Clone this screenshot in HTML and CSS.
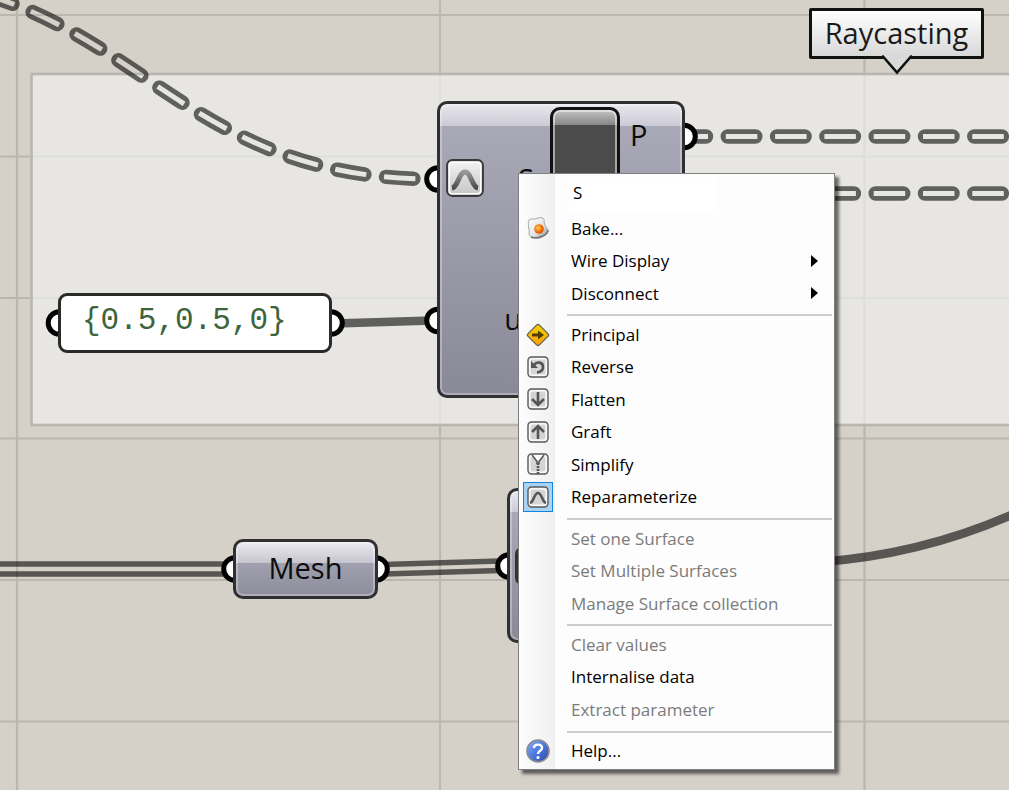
FILE: index.html
```html
<!DOCTYPE html>
<html lang="en">
<head>
<meta charset="utf-8">
<title>Raycasting definition</title>
<link rel="stylesheet" href="styles.css">
</head>
<body>
<main class="canvas">
  <svg class="layer" aria-hidden="true">
    <defs>
      <mask id="hollow" maskUnits="userSpaceOnUse" x="-200" y="-60" width="3000" height="400">
        <g fill="none" stroke="#fff" stroke-width="14.5" stroke-linecap="round" stroke-dasharray="27.5 21.8">
          <path d="M433 179C158 179 132 -23 -143 -23" stroke-dashoffset="-19.5"/>
          <path d="M678.5 136.5H2700M678.5 193.5H2700"/>
        </g>
        <g fill="none" stroke="#000" stroke-width="5" stroke-dasharray="31.5 17.8">
          <path d="M433 179C158 179 132 -23 -143 -23" stroke-dashoffset="-17.5"/>
          <path d="M676.5 136.5H2700M676.5 193.5H2700"/>
        </g>
      </mask>
    </defs>
    <g class="grid-lines">
      <path d="M17 0V2000M440 0V2000M864.5 0V2000M1288 0V2000M0 15H3000M0 156.5H3000M0 298H3000M0 438.5H3000M0 580H3000M0 721.5H3000M0 863H3000"/>
    </g>
    <rect class="group" x="31.5" y="74" width="2900" height="351"/>
    <rect class="wire-fill" x="-200" y="-60" width="3000" height="400" mask="url(#hollow)"/>
    <g class="wire">
      <path stroke-width="8.5" d="M335 323.5L432 320.5M820 562Q919 554.8 1009 516L1060 494"/>
      <path stroke-width="5.5" d="M0 564H228M0 574H228M384 564.5L500 561M384 574L500 570.5"/>
    </g>
    <g class="ports">
      <circle cx="438" cy="179" r="11.3"/><circle cx="438" cy="320.500" r="11.3"/>
      <circle cx="684" cy="136.500" r="11.3"/>
      <circle cx="59.500" cy="323" r="11.3"/><circle cx="331" cy="323" r="11.3"/>
      <circle cx="235" cy="569" r="11.3"/><circle cx="376" cy="569" r="11.3"/>
      <circle cx="509" cy="566" r="11.3"/>
    </g>
  </svg>

  <div class="callout">Raycasting
    <svg class="callout-tip" viewBox="0 0 32 21" aria-hidden="true"><path d="M1 0H31V1.500L16 18L1 1.500Z" fill="#dadada"/><path d="M1 1.500H2L16 17.500L30 1.500H31" fill="none" stroke="#111" stroke-width="2.600"/></svg>
  </div>

  <section class="node evaluate">
    <div class="inputs">
      <div class="input">
        <svg class="param-icon" viewBox="0 0 38 38" aria-hidden="true">
          <defs><linearGradient id="pi" x2="0" y2="1"><stop stop-color="#f4f4f4"/><stop offset="1" stop-color="#c4c4c4"/></linearGradient><linearGradient id="hump" x2="0" y2="1"><stop stop-color="#999"/><stop offset="1" stop-color="#4c4c4c"/></linearGradient></defs>
          <rect x="1.200" y="1.200" width="35.600" height="35.600" rx="5" fill="url(#pi)" stroke="#3a3a3a" stroke-width="2.200"/>
          <rect x="3.200" y="3.200" width="31.600" height="31.600" rx="3" fill="none" stroke="#fff" stroke-width="1.600"/>
          <path d="M6 29C12 28 13 13 19 13S26 28 32 29" fill="none" stroke="url(#hump)" stroke-width="5"/>
        </svg>
        <span>S</span>
      </div>
      <div class="input second"><span>u</span></div>
    </div>
    <div class="core"></div>
    <div class="output">P</div>
  </section>

  <div class="panel">{0.5,0.5,0}</div>
  <section class="node mesh">Mesh</section>
  <section class="node partial"><div class="partial-core"></div></section>

  <ul class="menu">
    <li class="row name-row"><input class="name" type="text" value="S" aria-label="Parameter name"></li>
    <li class="row"><button class="item"><svg class="icon" viewBox="0 0 24 24" aria-hidden="true"><defs><radialGradient id="yolk" cx=".4" cy=".4"><stop stop-color="#ffd873"/><stop offset=".5" stop-color="#fb931d"/><stop offset="1" stop-color="#e55b06"/></radialGradient><linearGradient id="egg" x2="1" y2="1"><stop stop-color="#fff"/><stop offset=".6" stop-color="#e3e3e3"/><stop offset="1" stop-color="#888"/></linearGradient></defs><path d="M3 4C5 2 9 4 12 2C16 1 19 2 18 6C18 10 22 12 22 15C21 19 17 20 14 21C10 22 4 22 3 18C4 14 1 8 3 4Z" fill="url(#egg)" stroke="#a5a5a5"/><path d="M5 21C10 23 13 22 16 20.500C19 19 22 18 22 14" fill="none" stroke="#707070" stroke-width="1.500"/><circle cx="13" cy="13" r="4.800" fill="url(#yolk)"/></svg><span>Bake...</span></button></li>
    <li class="row"><button class="item"><span>Wire Display</span><svg class="arrow" viewBox="0 0 7 12" aria-hidden="true"><path d="M0 0L7 6L0 12Z"/></svg></button></li>
    <li class="row"><button class="item"><span>Disconnect</span><svg class="arrow" viewBox="0 0 7 12" aria-hidden="true"><path d="M0 0L7 6L0 12Z"/></svg></button></li>
    <li class="separator"></li>
    <li class="row"><button class="item"><svg class="icon" viewBox="0 0 24 24" aria-hidden="true"><defs><linearGradient id="gold" x2="1" y2="1"><stop stop-color="#f1d000"/><stop offset=".5" stop-color="#f4bd07"/><stop offset="1" stop-color="#ff9800"/></linearGradient></defs><rect x="4" y="4" width="16" height="16" rx="2" transform="rotate(45 12 12)" fill="url(#gold)" stroke="#67604f" stroke-width="1.300"/><path d="M6 10.500H12V7.500L18 12L12 16.500V13.500H6Z" fill="#513d00"/></svg><span>Principal</span></button></li>
    <li class="row"><button class="item"><svg class="icon boxed" viewBox="0 0 24 24" aria-hidden="true"><rect x="2" y="2" width="20" height="20" rx="3.500"/><path class="inner" d="M4 18V5.500Q4 4 5.500 4H18.500Q20 4 20 5.500V18.500Q20 20 18.500 20H5.500Q4 20 4 18Z"/><path class="mark" d="M8 10C11 6 17 7 17 12C17 15 15 17 11 17.500"/><path class="solid" d="M5 6V13H12Z"/></svg><span>Reverse</span></button></li>
    <li class="row"><button class="item"><svg class="icon boxed" viewBox="0 0 24 24" aria-hidden="true"><rect x="2" y="2" width="20" height="20" rx="3.500"/><rect class="inner" x="4" y="4" width="16" height="16" rx="2"/><path class="mark" d="M12 5V17M6 12L12 18L18 12"/></svg><span>Flatten</span></button></li>
    <li class="row"><button class="item"><svg class="icon boxed" viewBox="0 0 24 24" aria-hidden="true"><rect x="2" y="2" width="20" height="20" rx="3.500"/><rect class="inner" x="4" y="4" width="16" height="16" rx="2"/><path class="mark" d="M12 19V7M6 12L12 6L18 12"/></svg><span>Graft</span></button></li>
    <li class="row"><button class="item"><svg class="icon boxed" viewBox="0 0 24 24" aria-hidden="true"><rect x="2" y="2" width="20" height="20" rx="3.500"/><rect class="inner" x="4" y="4" width="16" height="16" rx="2"/><path d="M7 3L12 9L17 3Z" fill="#fff"/><path class="mark thin" d="M6 3L11 9.500V12M18 3L13 9.500V12"/><path class="mark" d="M12 11V22" stroke-dasharray="2 1"/></svg><span>Simplify</span></button></li>
    <li class="row"><button class="item" aria-pressed="true"><svg class="icon boxed checked" viewBox="0 0 24 24" aria-hidden="true"><rect x="2" y="2" width="20" height="20" rx="3.500"/><rect class="inner" x="4" y="4" width="16" height="16" rx="2"/><path class="mark" d="M4 18C8 17 8 8 12 8S16 17 20 18"/></svg><span>Reparameterize</span></button></li>
    <li class="separator"></li>
    <li class="row"><button class="item" disabled><span>Set one Surface</span></button></li>
    <li class="row"><button class="item" disabled><span>Set Multiple Surfaces</span></button></li>
    <li class="row"><button class="item" disabled><span>Manage Surface collection</span></button></li>
    <li class="separator"></li>
    <li class="row"><button class="item" disabled><span>Clear values</span></button></li>
    <li class="row"><button class="item"><span>Internalise data</span></button></li>
    <li class="row"><button class="item" disabled><span>Extract parameter</span></button></li>
    <li class="separator"></li>
    <li class="row"><button class="item"><svg class="icon" viewBox="0 0 24 24" aria-hidden="true"><defs><linearGradient id="help" x2="1" y2="1"><stop stop-color="#8cb0f3"/><stop offset=".5" stop-color="#4a79dc"/><stop offset="1" stop-color="#3340a6"/></linearGradient></defs><circle cx="12" cy="12" r="11" fill="url(#help)" stroke="#8b8b94" stroke-width="1.600"/><path d="M8 9C8 4.500 16 4.500 16 9C16 12 12 11.500 12 15" fill="none" stroke="#fff" stroke-width="2.400"/><circle cx="12" cy="18.500" r="1.600" fill="#fff"/></svg><span>Help...</span></button></li>
  </ul>
</main>
</body>
</html>
```
FILE: styles.css
```css
* { box-sizing: border-box; }

body {
  margin: 0;
  font-family: "Open Sans", "Noto Sans", sans-serif;
  color: #000;
}

.canvas {
  position: relative;
  min-height: 100vh;
  overflow: hidden;
  background: #d5d0c8;
}

.layer {
  position: absolute;
  inset: 0;
  width: 100%;
  height: 100%;
}

.grid-lines { fill: none; stroke: #bab7ae; stroke-width: 2.2; }
.group { fill: rgba(238, 239, 236, 0.7); stroke: #b8b6b0; stroke-width: 2.6; }
.wire-fill { fill: #000; opacity: 0.58; }
.wire { fill: none; stroke: #000; stroke-opacity: 0.59; }
.ports { fill: #fff; stroke: #000; stroke-width: 5; }

.callout {
  position: absolute;
  left: 809px;
  top: 8px;
  width: 175px;
  height: 51px;
  border: 3px solid #111;
  border-radius: 2px;
  background: linear-gradient(#fff, #d8d8d8);
  font-size: 29px;
  line-height: 44px;
  text-align: center;
  color: #1a1a1a;
}

.callout-tip {
  position: absolute;
  left: 69px;
  top: 44px;
  width: 32px;
  height: 21px;
}

.node {
  position: absolute;
  border: 3px solid #303033;
  border-radius: 10px;
  font-size: 29px;
  color: #0c0c0c;
  box-shadow: inset 0 0 0 2px rgba(255, 255, 255, 0.3);
}

.evaluate {
  left: 437px;
  top: 101px;
  width: 248px;
  height: 297px;
  padding: 3px 32px 3px 6px;
  display: grid;
  grid-template-columns: 104px 70px 1fr;
  background: linear-gradient(#e9e8ee 0, #cbcad5 22px, #a9a8b7 22px, #8a8998 100%);
}

.inputs { display: grid; grid-template-rows: 1fr 1fr; }
.input { display: flex; align-items: center; justify-content: space-between; padding-right: 16px; }
.input.second { justify-content: flex-end; padding: 0 28px 4px 0; }
.param-icon { width: 38px; height: 38px; }

.core {
  height: 120px;
  border: 3px solid #111;
  border-radius: 10px;
  background: linear-gradient(#c4c4c4 0, #868686 15px, #4b4b4b 15px);
  box-shadow: inset 0 0 0 2px rgba(255, 255, 255, 0.5);
}

.output { padding-left: 10px; line-height: 56px; }

.panel {
  position: absolute;
  left: 58px;
  top: 293px;
  width: 274px;
  height: 60px;
  padding-left: 21px;
  border: 3px solid #2a2a2a;
  border-radius: 9px;
  background: #fff;
  font: 31px/50px "Liberation Mono", monospace;
  color: #3c653c;
}

.mesh {
  left: 233px;
  top: 539px;
  width: 145px;
  height: 60px;
  line-height: 52px;
  text-align: center;
  background: linear-gradient(#ecebef 0, #c6c5cf 21px, #a1a0ae 21px, #8d8c9b 100%);
}

.partial {
  left: 507px;
  top: 488px;
  width: 248px;
  height: 155px;
  padding: 56px 5px;
  background: linear-gradient(#e9e8ee 0, #cbcad5 21px, #a9a8b7 21px, #8a8998 100%);
}

.partial-core { width: 38px; height: 38px; border-radius: 7px; background: #333; }

.menu {
  position: absolute;
  left: 518px;
  top: 173px;
  width: 317px;
  min-height: 597px;
  margin: 0;
  padding: 3px 2px 2px;
  display: flex;
  flex-direction: column;
  list-style: none;
  border: 1px solid #808080;
  background: linear-gradient(90deg, #fdfdfd, #f0f0f0) 0 0 / 36px 100% no-repeat #fdfdfd;
  box-shadow: 4px 4px 3px rgba(0, 0, 0, 0.55);
  font-size: 17px;
}

.row { display: flex; flex: 1 0 32px; }
.name-row { flex: 0 0 35px; padding-left: 48px; }

.name {
  width: 147px;
  padding: 0 4px 4px;
  border: 0;
  background: #fff;
  font: inherit;
}

.item {
  flex: 1;
  display: grid;
  grid-template-columns: 50px 1fr 21px;
  align-items: center;
  padding: 0;
  border: 0;
  background: none;
  font: inherit;
  color: #000;
  text-align: left;
}

.item span { grid-column: 2; grid-row: 1; white-space: nowrap; }
.item:disabled { color: #7b7b7b; }
.icon { grid-column: 1; grid-row: 1; width: 24px; height: 24px; margin-left: 5px; }
.arrow { grid-column: 3; grid-row: 1; width: 7px; height: 12px; }

.checked {
  width: 30px;
  height: 30px;
  margin-left: 2px;
  padding: 2px;
  border: 1px solid #1583dc;
  background: #a9d3f5;
}

.boxed rect { fill: #f0f0f0; stroke: #5a5a5a; stroke-width: 1.4; }
.boxed .inner { fill: #d4d4d4; stroke: #fff; stroke-width: 1; }
.boxed .mark { fill: none; stroke: #555; stroke-width: 2.6; }
.boxed .mark.thin { stroke-width: 1.5; }
.boxed .solid { fill: #555; }

.separator {
  flex: 0 0 9px;
  margin-left: 46px;
  background: linear-gradient(#cdcdcd, #cdcdcd) 0 5px / 100% 2px no-repeat;
}
```
